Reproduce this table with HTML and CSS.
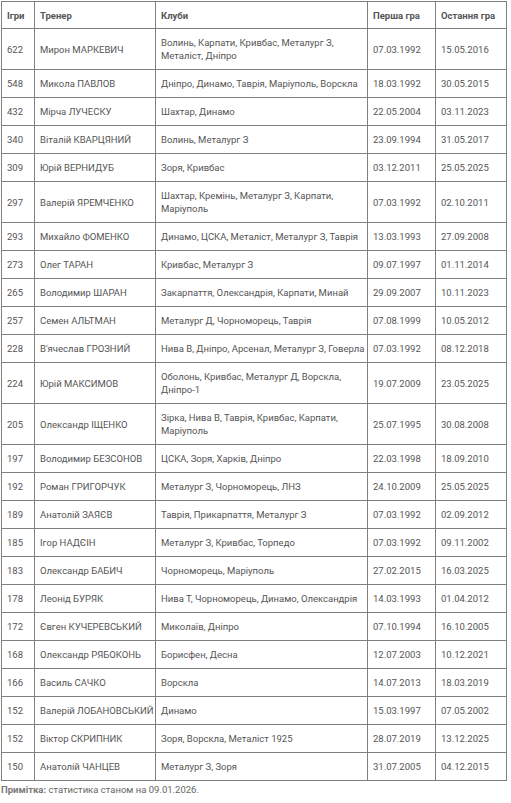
FILE: index.html
```html
<!DOCTYPE html>
<html lang="uk">
<head>
<meta charset="utf-8">
<title>Тренери</title>
<link rel="stylesheet" href="styles.css">
</head>
<body>
<table class="stats">
<colgroup>
<col class="c-games"><col class="c-coach"><col class="c-clubs"><col class="c-first"><col class="c-last">
</colgroup>
<thead>
<tr><th>Ігри</th><th>Тренер</th><th>Клуби</th><th>Перша гра</th><th>Остання гра</th></tr>
</thead>
<tbody>
<tr><td>622</td><td>Мирон МАРКЕВИЧ</td><td>Волинь, Карпати, Кривбас, Металург З,<br>Металіст, Дніпро</td><td>07.03.1992</td><td>15.05.2016</td></tr>
<tr><td>548</td><td>Микола ПАВЛОВ</td><td>Дніпро, Динамо, Таврія, Маріуполь, Ворскла</td><td>18.03.1992</td><td>30.05.2015</td></tr>
<tr><td>432</td><td>Мірча ЛУЧЕСКУ</td><td>Шахтар, Динамо</td><td>22.05.2004</td><td>03.11.2023</td></tr>
<tr><td>340</td><td>Віталій КВАРЦЯНИЙ</td><td>Волинь, Металург З</td><td>23.09.1994</td><td>31.05.2017</td></tr>
<tr><td>309</td><td>Юрій ВЕРНИДУБ</td><td>Зоря, Кривбас</td><td>03.12.2011</td><td>25.05.2025</td></tr>
<tr><td>297</td><td>Валерій ЯРЕМЧЕНКО</td><td>Шахтар, Кремінь, Металург З, Карпати,<br>Маріуполь</td><td>07.03.1992</td><td>02.10.2011</td></tr>
<tr><td>293</td><td>Михайло ФОМЕНКО</td><td>Динамо, ЦСКА, Металіст, Металург З, Таврія</td><td>13.03.1993</td><td>27.09.2008</td></tr>
<tr><td>273</td><td>Олег ТАРАН</td><td>Кривбас, Металург З</td><td>09.07.1997</td><td>01.11.2014</td></tr>
<tr><td>265</td><td>Володимир ШАРАН</td><td>Закарпаття, Олександрія, Карпати, Минай</td><td>29.09.2007</td><td>10.11.2023</td></tr>
<tr><td>257</td><td>Семен АЛЬТМАН</td><td>Металург Д, Чорноморець, Таврія</td><td>07.08.1999</td><td>10.05.2012</td></tr>
<tr><td>228</td><td>В'ячеслав ГРОЗНИЙ</td><td>Нива В, Дніпро, Арсенал, Металург З, Говерла</td><td>07.03.1992</td><td>08.12.2018</td></tr>
<tr><td>224</td><td>Юрій МАКСИМОВ</td><td>Оболонь, Кривбас, Металург Д, Ворскла,<br>Дніпро-1</td><td>19.07.2009</td><td>23.05.2025</td></tr>
<tr><td>205</td><td>Олександр ІЩЕНКО</td><td>Зірка, Нива В, Таврія, Кривбас, Карпати,<br>Маріуполь</td><td>25.07.1995</td><td>30.08.2008</td></tr>
<tr><td>197</td><td>Володимир БЕЗСОНОВ</td><td>ЦСКА, Зоря, Харків, Дніпро</td><td>22.03.1998</td><td>18.09.2010</td></tr>
<tr><td>192</td><td>Роман ГРИГОРЧУК</td><td>Металург З, Чорноморець, ЛНЗ</td><td>24.10.2009</td><td>25.05.2025</td></tr>
<tr><td>189</td><td>Анатолій ЗАЯЄВ</td><td>Таврія, Прикарпаття, Металург З</td><td>07.03.1992</td><td>02.09.2012</td></tr>
<tr><td>185</td><td>Ігор НАДЄІН</td><td>Металург З, Кривбас, Торпедо</td><td>07.03.1992</td><td>09.11.2002</td></tr>
<tr><td>183</td><td>Олександр БАБИЧ</td><td>Чорноморець, Маріуполь</td><td>27.02.2015</td><td>16.03.2025</td></tr>
<tr><td>178</td><td>Леонід БУРЯК</td><td>Нива Т, Чорноморець, Динамо, Олександрія</td><td>14.03.1993</td><td>01.04.2012</td></tr>
<tr><td>172</td><td>Євген КУЧЕРЕВСЬКИЙ</td><td>Миколаїв, Дніпро</td><td>07.10.1994</td><td>16.10.2005</td></tr>
<tr><td>168</td><td>Олександр РЯБОКОНЬ</td><td>Борисфен, Десна</td><td>12.07.2003</td><td>10.12.2021</td></tr>
<tr><td>166</td><td>Василь САЧКО</td><td>Ворскла</td><td>14.07.2013</td><td>18.03.2019</td></tr>
<tr><td>152</td><td>Валерій ЛОБАНОВСЬКИЙ</td><td>Динамо</td><td>15.03.1997</td><td>07.05.2002</td></tr>
<tr><td>152</td><td>Віктор СКРИПНИК</td><td>Зоря, Ворскла, Металіст 1925</td><td>28.07.2019</td><td>13.12.2025</td></tr>
<tr><td>150</td><td>Анатолій ЧАНЦЕВ</td><td>Металург З, Зоря</td><td>31.07.2005</td><td>04.12.2015</td></tr>
</tbody>
</table>
<p class="note"><b>Примітка:</b> статистика станом на 09.01.2026.</p>
</body>
</html>
```
FILE: styles.css
```css
html, body {
  margin: 0;
  padding: 0;
  background: #fff;
}
body {
  padding: 1px 0 0 1px;
  font-family: Roboto, "Noto Sans", sans-serif;
  font-size: 9.5px;
  color: #555;
}
.stats {
  border-collapse: collapse;
  table-layout: fixed;
  width: 505px;
}
.c-games { width: 33px; }
.c-coach { width: 121px; }
.c-clubs { width: 212px; }
.c-first { width: 68px; }
.c-last { width: 71px; }
.stats th, .stats td {
  border: 1px solid #808080;
  text-align: left;
  vertical-align: middle;
  padding: 7px 5px;
  line-height: 13px;
  white-space: nowrap;
  overflow: hidden;
}
.stats th {
  font-weight: bold;
  padding: 6.5px 5px;
}
.note {
  margin: 2px 0 0 0;
  color: #666;
  line-height: 14px;
}
.note b {
  color: #777;
}
```
